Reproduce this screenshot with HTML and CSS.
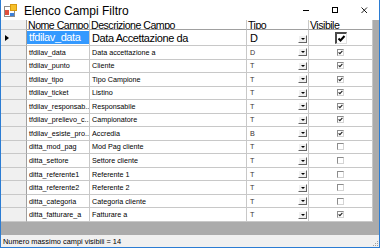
FILE: index.html
```html
<!DOCTYPE html>
<html lang="it">
<head>
  <meta charset="UTF-8">
  <title>Elenco Campi Filtro</title>
  <link rel="stylesheet" href="styles.css">
</head>
<body>

<div class="window">
  <div class="titlebar">
    <svg class="appicon" width="13" height="13" viewBox="0 0 13 13">
      <rect x="0.5" y="2.5" width="10" height="10" fill="#fff" stroke="#8c8c8c"/>
      <rect x="6.5" y="0.5" width="6" height="6" fill="#f6c02a" stroke="#d99a10"/>
      <rect x="1" y="6" width="4" height="5" fill="#e0503c"/>
      <rect x="6" y="9" width="4" height="3" fill="#3b7fd8"/>
    </svg>
    <span class="title">Elenco Campi Filtro</span>
    <div class="caption">
      <div class="caption-btn">
        <svg width="7" height="7" viewBox="0 0 7 7"><path d="M0 3.5H6" stroke="#000" stroke-width="1"/></svg>
      </div>
      <div class="caption-btn">
        <svg width="7" height="7" viewBox="0 0 7 7"><rect x="0.5" y="0.5" width="5" height="5" fill="none" stroke="#000"/></svg>
      </div>
      <div class="caption-btn">
        <svg width="7" height="7" viewBox="0 0 7 7"><path d="M0.5 0.5L6 6M6 0.5L0.5 6" stroke="#000" stroke-width="0.9"/></svg>
      </div>
    </div>
  </div>

  <div class="grid">
    <div class="row head">
      <div class="rh"></div>
      <div class="cell">Nome Campo</div>
      <div class="cell">Descrizione Campo</div>
      <div class="cell">Tipo</div>
      <div class="cell">Visibile</div>
    </div>

    <div class="row current">
      <div class="rh"><span class="arrow"></span></div>
      <div class="cell"><span class="sel">tfdilav_data</span></div>
      <div class="cell">Data Accettazione da</div>
      <div class="cell tipo"><span>D</span><i class="drop"></i></div>
      <div class="cell vis"><span class="chk big"><svg viewBox="0 0 9 9"><path d="M1.5 4.5L3.5 6.5L7.5 2" fill="none" stroke="#000" stroke-width="2"/></svg></span></div>
    </div>

    <div class="row">
      <div class="rh"></div>
      <div class="cell">tfdilav_data</div>
      <div class="cell">Data accettazione a</div>
      <div class="cell tipo"><span>D</span><i class="drop"></i></div>
      <div class="cell vis"><span class="chk"><svg viewBox="0 0 5 5"><path d="M0.6 2.4L1.9 3.7L4.4 0.9" fill="none" stroke="#222" stroke-width="1.1"/></svg></span></div>
    </div>
    <div class="row">
      <div class="rh"></div>
      <div class="cell">tfdilav_punto</div>
      <div class="cell">Cliente</div>
      <div class="cell tipo"><span>T</span><i class="drop"></i></div>
      <div class="cell vis"><span class="chk"><svg viewBox="0 0 5 5"><path d="M0.6 2.4L1.9 3.7L4.4 0.9" fill="none" stroke="#222" stroke-width="1.1"/></svg></span></div>
    </div>
    <div class="row">
      <div class="rh"></div>
      <div class="cell">tfdilav_tipo</div>
      <div class="cell">Tipo Campione</div>
      <div class="cell tipo"><span>T</span><i class="drop"></i></div>
      <div class="cell vis"><span class="chk"><svg viewBox="0 0 5 5"><path d="M0.6 2.4L1.9 3.7L4.4 0.9" fill="none" stroke="#222" stroke-width="1.1"/></svg></span></div>
    </div>
    <div class="row">
      <div class="rh"></div>
      <div class="cell">tfdilav_ticket</div>
      <div class="cell">Listino</div>
      <div class="cell tipo"><span>T</span><i class="drop"></i></div>
      <div class="cell vis"><span class="chk"><svg viewBox="0 0 5 5"><path d="M0.6 2.4L1.9 3.7L4.4 0.9" fill="none" stroke="#222" stroke-width="1.1"/></svg></span></div>
    </div>
    <div class="row">
      <div class="rh"></div>
      <div class="cell">tfdilav_responsab...</div>
      <div class="cell">Responsabile</div>
      <div class="cell tipo"><span>T</span><i class="drop"></i></div>
      <div class="cell vis"><span class="chk"><svg viewBox="0 0 5 5"><path d="M0.6 2.4L1.9 3.7L4.4 0.9" fill="none" stroke="#222" stroke-width="1.1"/></svg></span></div>
    </div>
    <div class="row">
      <div class="rh"></div>
      <div class="cell">tfdilav_prelievo_c...</div>
      <div class="cell">Campionatore</div>
      <div class="cell tipo"><span>T</span><i class="drop"></i></div>
      <div class="cell vis"><span class="chk"><svg viewBox="0 0 5 5"><path d="M0.6 2.4L1.9 3.7L4.4 0.9" fill="none" stroke="#222" stroke-width="1.1"/></svg></span></div>
    </div>
    <div class="row">
      <div class="rh"></div>
      <div class="cell">tfdilav_esiste_pro...</div>
      <div class="cell">Accredia</div>
      <div class="cell tipo"><span>B</span><i class="drop"></i></div>
      <div class="cell vis"><span class="chk"><svg viewBox="0 0 5 5"><path d="M0.6 2.4L1.9 3.7L4.4 0.9" fill="none" stroke="#222" stroke-width="1.1"/></svg></span></div>
    </div>
    <div class="row">
      <div class="rh"></div>
      <div class="cell">ditta_mod_pag</div>
      <div class="cell">Mod Pag cliente</div>
      <div class="cell tipo"><span>T</span><i class="drop"></i></div>
      <div class="cell vis"><span class="chk"></span></div>
    </div>
    <div class="row">
      <div class="rh"></div>
      <div class="cell">ditta_settore</div>
      <div class="cell">Settore cliente</div>
      <div class="cell tipo"><span>T</span><i class="drop"></i></div>
      <div class="cell vis"><span class="chk"></span></div>
    </div>
    <div class="row">
      <div class="rh"></div>
      <div class="cell">ditta_referente1</div>
      <div class="cell">Referente 1</div>
      <div class="cell tipo"><span>T</span><i class="drop"></i></div>
      <div class="cell vis"><span class="chk"></span></div>
    </div>
    <div class="row">
      <div class="rh"></div>
      <div class="cell">ditta_referente2</div>
      <div class="cell">Referente 2</div>
      <div class="cell tipo"><span>T</span><i class="drop"></i></div>
      <div class="cell vis"><span class="chk"></span></div>
    </div>
    <div class="row">
      <div class="rh"></div>
      <div class="cell">ditta_categoria</div>
      <div class="cell">Categoria cliente</div>
      <div class="cell tipo"><span>T</span><i class="drop"></i></div>
      <div class="cell vis"><span class="chk"></span></div>
    </div>
    <div class="row">
      <div class="rh"></div>
      <div class="cell">ditta_fatturare_a</div>
      <div class="cell">Fatturare a</div>
      <div class="cell tipo"><span>T</span><i class="drop"></i></div>
      <div class="cell vis"><span class="chk"><svg viewBox="0 0 5 5"><path d="M0.6 2.4L1.9 3.7L4.4 0.9" fill="none" stroke="#222" stroke-width="1.1"/></svg></span></div>
    </div>
  </div>

  <div class="status">
    <span>Numero massimo campi visibili = 14</span>
    <svg class="grip" width="7" height="7" viewBox="0 0 7 7">
      <rect x="5" y="1" width="1" height="1" fill="#a0a0a0"/>
      <rect x="3" y="3" width="1" height="1" fill="#a0a0a0"/>
      <rect x="5" y="3" width="1" height="1" fill="#a0a0a0"/>
      <rect x="1" y="5" width="1" height="1" fill="#a0a0a0"/>
      <rect x="3" y="5" width="1" height="1" fill="#a0a0a0"/>
      <rect x="5" y="5" width="1" height="1" fill="#a0a0a0"/>
    </svg>
  </div>
</div>

</body>
</html>
```

FILE: styles.css
```css
* {
  box-sizing: border-box;
  margin: 0;
  padding: 0;
}

body {
  width: 380px;
  height: 248px;
  overflow: hidden;
  background: #fff;
  font-family: 'Liberation Sans', Arial, sans-serif;
  color: #000;
}

.window {
  height: 248px;
  display: flex;
  flex-direction: column;
  border: 1px solid #2b7cd3;
  border-top: none;
}

/* title bar */
.titlebar {
  height: 20px;
  flex: none;
  display: flex;
  align-items: center;
  background: #fff;
}

.appicon {
  margin: 0 7px 0 3px;
  flex: none;
}

.title {
  flex: 1;
  font-size: 12px;
  padding-top: 1px;
}

.caption {
  display: flex;
  align-self: stretch;
}

.caption-btn {
  width: 29px;
  display: flex;
  align-items: center;
  justify-content: center;
}

/* grid */
.grid {
  flex: 1;
  display: flex;
  flex-direction: column;
  background: #ababab;
  overflow: hidden;
}

.row {
  display: grid;
  grid-template-columns: 26px 63px 157px 62px 64px;
  height: 13.54px;
  flex: none;
  font-size: 7.2px;
}

.cell {
  background: #fff;
  border-right: 1px solid #c8c8c8;
  border-bottom: 1px solid #c8c8c8;
  padding-left: 2px;
  overflow: hidden;
  white-space: nowrap;
  display: flex;
  align-items: center;
}

.rh {
  background: #f0f0f0;
  border-right: 1px solid #a0a0a0;
  border-bottom: 1px solid #c8c8c8;
  display: flex;
  align-items: center;
  padding-left: 4px;
}

.row.head {
  height: 10px;
  font-size: 10.6px;
  letter-spacing: -0.5px;
  line-height: 10px;
}

.row.head .cell {
  border-bottom-color: #a0a0a0;
  padding-left: 1px;
}

.row.current {
  height: 16px;
  font-size: 11px;
  letter-spacing: -0.4px;
  line-height: 14px;
}

.arrow {
  width: 0;
  height: 0;
  border-top: 3px solid transparent;
  border-bottom: 3px solid transparent;
  border-left: 4px solid #000;
}

.sel {
  flex: 1;
  align-self: stretch;
  margin: 1px 0 1px -2px;
  padding-left: 2px;
  background: #3399ff;
  color: #fff;
  line-height: 13px;
}

.tipo {
  justify-content: space-between;
  padding: 0 1px 0 3px;
  color: #3a3030;
}

.current .tipo {
  color: #000;
}

.drop {
  width: 9px;
  height: 8px;
  background: #f0f0f0;
  border: 1px solid;
  border-color: #fff #646464 #646464 #fff;
  display: flex;
  align-items: center;
  justify-content: center;
}

.drop::after {
  content: "";
  border-left: 2px solid transparent;
  border-right: 2px solid transparent;
  border-top: 2px solid #000;
}

.current .drop {
  margin-top: 3px;
}

.vis {
  justify-content: center;
  padding: 0;
}

.chk {
  width: 7px;
  height: 7px;
  background: #fff;
  border: 1px solid;
  border-color: #8c8c8c #d4d4d4 #d4d4d4 #8c8c8c;
  display: flex;
}

.chk svg {
  width: 100%;
  height: 100%;
}

.chk.big {
  width: 12px;
  height: 12px;
  border-width: 2px 1px 1px 2px;
  border-color: #4a4a4a #e0e0e0 #e0e0e0 #4a4a4a;
  margin-left: 1px;
}

/* status bar */
.status {
  height: 12px;
  flex: none;
  background: #f0f0f0;
  font-size: 7.4px;
  display: flex;
  align-items: center;
  justify-content: space-between;
  padding-left: 2px;
}

.grip {
  align-self: flex-end;
}
```
